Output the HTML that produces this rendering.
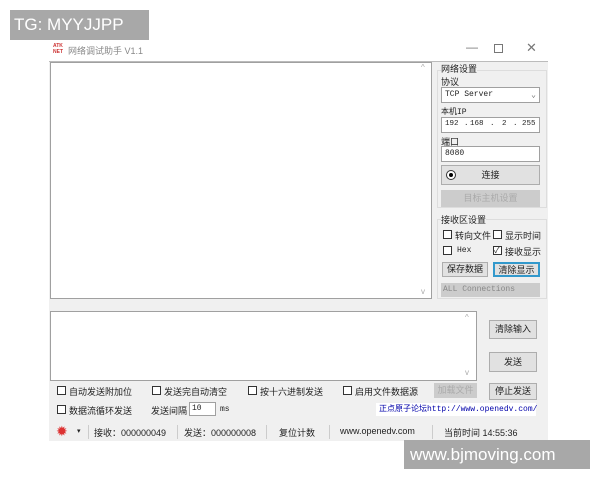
<!DOCTYPE html>
<html><head><meta charset="utf-8"><style>
*{margin:0;padding:0;box-sizing:border-box}
body{width:600px;height:480px;background:#fff;position:relative;overflow:hidden;font-family:"Liberation Sans","Noto Sans CJK SC",sans-serif;font-size:9px;color:#222}
.a{position:absolute;white-space:nowrap}
.box{position:absolute;background:#fff;border:1px solid #a0a0a0;white-space:nowrap;overflow:hidden}
.btn{position:absolute;background:#e1e1e1;border:1px solid #adadad;text-align:center;font-size:9px}
.cb{position:absolute;width:9px;height:9px;border:1px solid #333;background:#fff}
.mono{font-family:"Liberation Mono","Noto Sans CJK SC",monospace;font-size:8px}
.sep{position:absolute;top:425px;width:1px;height:14px;background:#ccc}
</style></head><body>
<div class="a" style="left:10px;top:10px;width:139px;height:30px;background:#a8a8a8;color:#fff;font-size:17px;line-height:30px;padding-left:4px">TG: MYYJJPP</div>
<div class="a" style="left:53px;top:43px;width:12px;height:12px;background:#fff;color:#c33;font-size:5px;line-height:6px;font-weight:bold">ATK<br>NET</div>
<div class="a" style="left:68px;top:44px;color:#888;font-size:9px">网络调试助手 V1.1</div>
<div class="a" style="left:466px;top:40px;color:#777;font-size:12px">&#8212;</div>
<div class="a" style="left:494px;top:44px;width:9px;height:9px;border:1px solid #777"></div>
<div class="a" style="left:526px;top:40px;color:#777;font-size:13px">✕</div>
<div class="a" style="left:49px;top:61px;width:499px;height:380px;background:#f0f0f0;border-top:1px solid #bbb"></div>
<div class="box" style="left:50px;top:62px;width:382px;height:237px"></div>
<div class="a" style="left:421px;top:63px;color:#aaa;font-size:8px">^</div>
<div class="a" style="left:421px;top:287px;color:#aaa;font-size:8px">v</div>
<div class="a" style="left:437px;top:70px;width:110px;height:138px;border:1px solid #ddd"></div>
<div class="a" style="left:441px;top:62px;background:#f0f0f0;font-size:9px">网络设置</div>
<div class="a" style="left:441px;top:75px">协议</div>
<div class="box mono" style="left:441px;top:87px;width:99px;height:16px;padding:2px 3px">TCP Server<span style="position:absolute;right:3px;color:#666">⌄</span></div>
<div class="a mono" style="left:441px;top:106px">本机IP</div>
<div class="box mono" style="left:441px;top:117px;width:99px;height:16px;font-size:7.5px">
<span class="a" style="left:3px;top:2px">192</span><span class="a" style="left:22px;top:2px">.</span><span class="a" style="left:28px;top:2px">168</span><span class="a" style="left:48px;top:2px">.</span><span class="a" style="left:60px;top:2px">2</span><span class="a" style="left:71px;top:2px">.</span><span class="a" style="left:80px;top:2px">255</span></div>
<div class="a" style="left:441px;top:135px">端口</div>
<div class="box mono" style="left:441px;top:146px;width:99px;height:16px;padding:2px 3px">8080</div>
<div class="btn" style="left:441px;top:165px;width:99px;height:20px;line-height:18px">连接</div>
<div class="a" style="left:446px;top:170px;width:10px;height:10px;border-radius:50%;border:1px solid #333;background:#fff"><div style="margin:2px;width:4px;height:4px;border-radius:50%;background:#000"></div></div>
<div class="btn" style="left:441px;top:190px;width:99px;height:17px;line-height:15px;color:#aaa;background:#ccc;border-color:#ccc">目标主机设置</div>
<div class="a" style="left:437px;top:219px;width:110px;height:80px;border:1px solid #ddd"></div>
<div class="a" style="left:441px;top:213px;background:#f0f0f0">接收区设置</div>
<div class="cb" style="left:443px;top:230px"></div><div class="a" style="left:455px;top:229px">转向文件</div>
<div class="cb" style="left:493px;top:230px"></div><div class="a" style="left:505px;top:229px">显示时间</div>
<div class="cb" style="left:443px;top:246px"></div><div class="a mono" style="left:457px;top:246px">Hex</div>
<div class="cb" style="left:493px;top:246px;font-size:8px;line-height:7px">✓</div><div class="a" style="left:505px;top:245px">接收显示</div>
<div class="btn" style="left:442px;top:262px;width:46px;height:15px;line-height:13px">保存数据</div>
<div class="btn" style="left:493px;top:262px;width:47px;height:15px;line-height:13px;border:2px solid #39c">清除显示</div>
<div class="a mono" style="left:441px;top:283px;width:99px;height:14px;background:#ccc;color:#888;padding:2px">ALL Connections</div>
<div class="box" style="left:50px;top:311px;width:427px;height:70px"></div>
<div class="a" style="left:465px;top:313px;color:#aaa;font-size:8px">^</div>
<div class="a" style="left:465px;top:368px;color:#aaa;font-size:8px">v</div>
<div class="btn" style="left:489px;top:320px;width:48px;height:19px;line-height:17px">清除输入</div>
<div class="btn" style="left:489px;top:352px;width:48px;height:20px;line-height:18px">发送</div>
<div class="cb" style="left:57px;top:386px"></div><div class="a" style="left:69px;top:385px">自动发送附加位</div>
<div class="cb" style="left:152px;top:386px"></div><div class="a" style="left:164px;top:385px">发送完自动清空</div>
<div class="cb" style="left:248px;top:386px"></div><div class="a" style="left:260px;top:385px">按十六进制发送</div>
<div class="cb" style="left:343px;top:386px"></div><div class="a" style="left:355px;top:385px">启用文件数据源</div>
<div class="btn" style="left:434px;top:383px;width:43px;height:15px;line-height:13px;color:#aaa;background:#ccc;border-color:#ccc">加载文件</div>
<div class="btn" style="left:489px;top:383px;width:48px;height:17px;line-height:15px">停止发送</div>
<div class="cb" style="left:57px;top:405px"></div><div class="a" style="left:69px;top:404px">数据流循环发送</div>
<div class="a" style="left:151px;top:404px">发送间隔</div>
<div class="box mono" style="left:189px;top:402px;width:27px;height:14px;padding:1px 2px">10</div>
<div class="a mono" style="left:220px;top:405px">ms</div>
<div class="a" style="left:376px;top:403px;width:160px;height:13px;background:#fff;color:#00a;font-size:8px;padding-left:3px">正点原子论坛<span class="mono">http://www.openedv.com/</span></div>
<div class="a" style="left:56px;top:424px;color:#d33;font-size:14px;line-height:14px">✹</div>
<div class="a" style="left:77px;top:427px;font-size:7px">▾</div>
<div class="sep" style="left:88px"></div>
<div class="a" style="left:94px;top:426px">接收：000000049</div>
<div class="sep" style="left:177px"></div>
<div class="a" style="left:184px;top:426px">发送：000000008</div>
<div class="sep" style="left:266px"></div>
<div class="a" style="left:279px;top:426px">复位计数</div>
<div class="sep" style="left:329px"></div>
<div class="a" style="left:340px;top:426px">www.openedv.com</div>
<div class="sep" style="left:432px"></div>
<div class="a" style="left:444px;top:426px">当前时间 14:55:36</div>
<div class="a" style="left:404px;top:440px;width:186px;height:29px;background:#a8a8a8;color:#fff;font-size:17px;line-height:29px;padding-left:6px">www.bjmoving.com</div>
</body></html>
